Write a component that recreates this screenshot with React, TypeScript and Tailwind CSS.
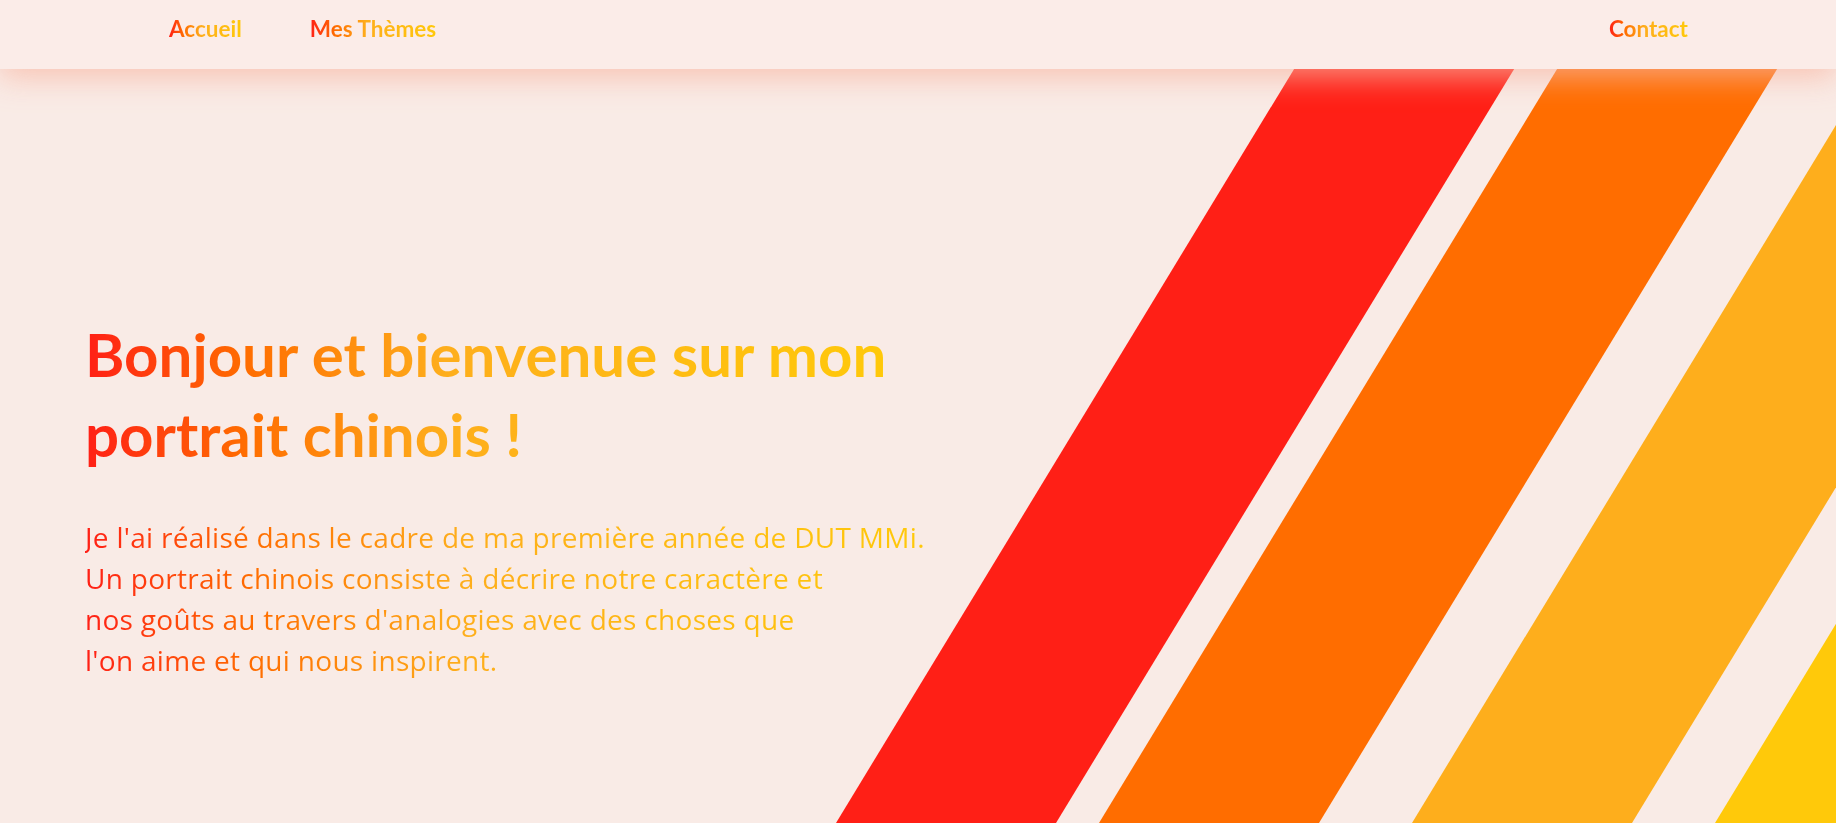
const gradientText =
  "bg-[linear-gradient(90deg,#ff1f16_0%,#ff6d00_20%,#feae1c_45%,#ffc90a_100%)] bg-clip-text text-transparent";

const Stripes = () => (
  <svg
    className="absolute inset-0 h-full w-full"
    viewBox="0 0 1836 823"
    preserveAspectRatio="none"
  >
    <polygon points="1336,0 1556,0 1056,823 836,823" fill="#ff1f16" />
    <polygon points="1599,0 1819,0 1319,823 1099,823" fill="#ff6d00" />
    <polygon points="1912,0 2132,0 1632,823 1412,823" fill="#feae1c" />
    <polygon points="2215,0 2435,0 1935,823 1715,823" fill="#ffc90a" />
  </svg>
);

const NavLink = ({ label }: { label: string }) => (
  <a href="#" className={`w-fit text-[22.5px] font-bold leading-[30px] ${gradientText}`}>
    {label}
  </a>
);

export default function App() {
  return (
    <div className="relative h-screen overflow-hidden bg-[#f9ebe6] font-['Lato',sans-serif]">
      <Stripes />

      <nav className="relative z-10 flex h-[69px] items-start justify-between bg-[#fbece8] pl-[169px] pr-[148px] pt-[14px] shadow-[0_8px_30px_rgba(248,181,161,0.75)]">
        <div className="flex gap-[68px]">
          <NavLink label="Accueil" />
          <NavLink label="Mes Thèmes" />
        </div>
        <NavLink label="Contact" />
      </nav>

      <main className="relative flex flex-col items-start pl-[85px] pt-[245px]">
        <h1 className={`w-fit text-[60px] font-bold leading-[80px] ${gradientText}`}>
          Bonjour et bienvenue sur mon
          <br />
          portrait chinois !
        </h1>

        <p
          className={`mt-[43px] w-fit font-['Open_Sans',sans-serif] text-[28px] leading-[41px] tracking-[0.3px] ${gradientText}`}
        >
          Je l'ai réalisé dans le cadre de ma première année de DUT MMi.
          <br />
          Un portrait chinois consiste à décrire notre caractère et
          <br />
          nos goûts au travers d'analogies avec des choses que
          <br />
          l'on aime et qui nous inspirent.
        </p>
      </main>
    </div>
  );
}
